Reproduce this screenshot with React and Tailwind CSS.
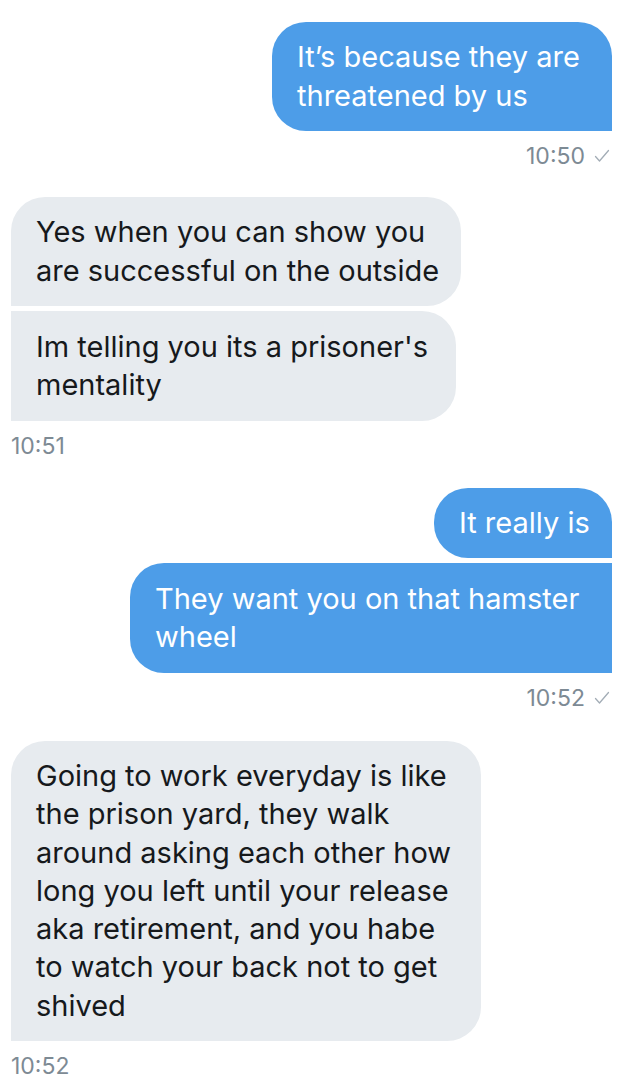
import React from 'react';

const font = { fontFamily: 'Inter, "Noto Sans", sans-serif' };

function Check() {
  return (
    <svg width="16" height="14" viewBox="0 0 16 14" className="ml-[9px] inline-block">
      <path d="M1.5 7.5 L5.5 12 L14.5 1.5" fill="none" stroke="#a3adb6" strokeWidth="1.3" strokeLinecap="round" strokeLinejoin="round" />
    </svg>
  );
}

function Time({ text, sent }) {
  return (
    <div className={`mt-[13px] flex items-center text-[23px] leading-[24px] text-[#7d8a94] ${sent ? 'justify-end pr-[2px]' : 'justify-start'}`}>
      <span>{text}</span>
      {sent && <Check />}
    </div>
  );
}

function Bubble({ lines, sent, className }) {
  const tone = sent ? 'bg-[#4d9de8] text-white' : 'bg-[#e7ebef] text-[#16191c]';
  return (
    <div className={`${tone} ${className} px-[25px] py-[16.3px] text-[29px] leading-[38.3px]`}>
      {lines.map((l) => (
        <div key={l} className="whitespace-nowrap">{l}</div>
      ))}
    </div>
  );
}

export default function App() {
  return (
    <div className="min-h-[1074px] bg-white pl-[11px] pr-[31px] pt-[22px]" style={font}>
      <div className="flex flex-col items-end">
        <Bubble
          sent
          className="w-[340px] rounded-[34px] rounded-br-none"
          lines={['It’s because they are', 'threatened by us']}
        />
      </div>
      <Time text="10:50" sent />

      <div className="mt-[29px] flex flex-col items-start gap-[5px]">
        <Bubble
          className="w-[450px] rounded-[34px] rounded-bl-none"
          lines={['Yes when you can show you', 'are successful on the outside']}
        />
        <Bubble
          className="w-[445px] rounded-[34px] rounded-tl-none rounded-bl-none"
          lines={["Im telling you its a prisoner's", 'mentality']}
        />
      </div>
      <Time text="10:51" />

      <div className="mt-[30px] flex flex-col items-end gap-[5px]">
        <Bubble
          sent
          className="w-[178px] rounded-[34px] rounded-br-none"
          lines={['It really is']}
        />
        <Bubble
          sent
          className="w-[482px] rounded-[34px] rounded-tr-none rounded-br-none"
          lines={['They want you on that hamster', 'wheel']}
        />
      </div>
      <Time text="10:52" sent />

      <div className="mt-[31px] flex flex-col items-start">
        <Bubble
          className="w-[470px] rounded-[34px] rounded-bl-none"
          lines={[
            'Going to work everyday is like',
            'the prison yard, they walk',
            'around asking each other how',
            'long you left until your release',
            'aka retirement, and you habe',
            'to watch your back not to get',
            'shived',
          ]}
        />
      </div>
      <Time text="10:52" />
    </div>
  );
}
